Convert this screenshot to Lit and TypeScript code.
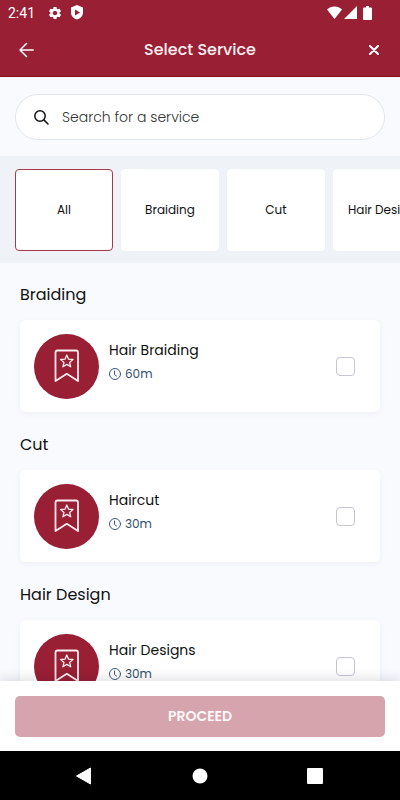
import { LitElement, html, css, svg } from "lit";
import { customElement, property, state } from "lit/decorators.js";
import { classMap } from "lit/directives/class-map.js";

interface Service {
  name: string;
  minutes: number;
}

interface Group {
  title: string;
  services: Service[];
}

const groups: Group[] = [
  { title: "Braiding", services: [{ name: "Hair Braiding", minutes: 60 }] },
  { title: "Cut", services: [{ name: "Haircut", minutes: 30 }] },
  { title: "Hair Design", services: [{ name: "Hair Designs", minutes: 30 }] },
];

const categories = ["All", "Braiding", "Cut", "Hair Design"];

const bookmark = svg`
  <path d="M1.500 32V3.500Q1.500 1.500 3.500 1.500H22Q24 1.500 24 3.500V32L12.800 24.800Z" stroke-width="1.800" />
  <path d="M12.800 6L14.600 10.200L19 10.500L15.600 13.400L16.700 17.800L12.800 15.400L8.900 17.800L10 13.400L6.600 10.500L11 10.200Z" stroke-width="1.300" />
`;

@customElement("service-card")
export class ServiceCard extends LitElement {
  @property() name = "";
  @property({ type: Number }) minutes = 0;

  static styles = css`
    :host {
      display: block;
    }
    .card {
      display: flex;
      align-items: center;
      gap: 10px;
      min-height: 92px;
      box-sizing: border-box;
      padding: 13px 25px 13px 14px;
      background: #fff;
      border-radius: 6px;
      box-shadow: 0 2px 6px rgba(40, 50, 90, 0.05);
    }
    .badge {
      display: grid;
      place-items: center;
      flex: none;
      width: 65px;
      height: 65px;
      border-radius: 50%;
      background: #991f34;
    }
    .mark {
      fill: none;
      stroke: #fbeef0;
      stroke-linejoin: round;
    }
    .text {
      flex: 1;
      min-width: 0;
      padding-bottom: 8px;
    }
    .name {
      display: block;
      font-size: 14px;
      line-height: 24px;
      color: #111;
    }
    .time {
      display: flex;
      align-items: center;
      gap: 4px;
      font-size: 12px;
      line-height: 24px;
      color: #34506b;
    }
    .clock {
      fill: none;
      stroke: #3d5a75;
      stroke-width: 1;
      stroke-linecap: round;
    }
    .tick {
      appearance: none;
      flex: none;
      width: 19px;
      height: 19px;
      margin: 0;
      border: 1px solid #c3c5d6;
      border-radius: 4px;
      background: #fff;
    }
    .tick:checked {
      background: #991f34;
      border-color: #991f34;
    }
  `;

  render() {
    return html`
      <div class="card">
        <div class="badge">
          <svg class="mark" width="26" height="34" viewBox="0 0 26 34">${bookmark}</svg>
        </div>
        <div class="text">
          <label class="name" for="pick">${this.name}</label>
          <div class="time">
            <svg class="clock" width="12" height="12" viewBox="0 0 12 12">
              <circle cx="6" cy="6" r="5.500" />
              <path d="M5.500 3V6.500L7.500 8" />
            </svg>
            <span>${this.minutes}m</span>
          </div>
        </div>
        <input class="tick" id="pick" type="checkbox" />
      </div>
    `;
  }
}

@customElement("app-root")
export class AppRoot extends LitElement {
  @state() private active = "All";

  static styles = css`
    :host {
      display: flex;
      flex-direction: column;
      height: 100vh;
      background: #f9fafe;
      color: #111;
      font-family: Poppins, Inter, sans-serif;
    }
    button {
      font: inherit;
      border: 0;
      padding: 0;
      cursor: pointer;
    }
    .status {
      display: flex;
      align-items: center;
      justify-content: space-between;
      flex: none;
      height: 25px;
      padding: 0 27px 0 8px;
      background: #991f34;
      color: #fff;
      fill: #fff;
    }
    .side {
      display: flex;
      align-items: center;
    }
    .clock {
      width: 32px;
      font: 14px/24px Roboto, sans-serif;
    }
    .notices {
      gap: 8px;
    }
    .signals {
      gap: 2px;
    }
    .bar {
      display: flex;
      align-items: center;
      justify-content: space-between;
      flex: none;
      box-sizing: border-box;
      height: 52px;
      padding: 0 18px 2px;
      background: #991f34;
      border-bottom: 1px solid #8b0a14;
      color: #fbeef0;
    }
    .title {
      margin: 0;
      font-size: 16px;
      font-weight: 500;
      line-height: 24px;
    }
    .tool {
      display: grid;
      place-items: center;
      width: 16px;
      height: 24px;
      background: none;
    }
    .line {
      fill: none;
      stroke: #fff;
      stroke-linecap: round;
      stroke-linejoin: round;
    }
    .content {
      flex: 1;
      min-height: 0;
      overflow-y: auto;
      scrollbar-width: none;
    }
    .search {
      display: flex;
      align-items: center;
      gap: 13px;
      box-sizing: border-box;
      height: 46px;
      margin: 17px 15px 16px;
      padding: 0 18px;
      border: 1px solid #e1e6ee;
      border-radius: 23px;
      background: #fff;
    }
    .lens {
      flex: none;
      fill: none;
      stroke: #111;
      stroke-width: 1.5;
      stroke-linecap: round;
    }
    .query {
      flex: 1;
      min-width: 0;
      padding: 0;
      border: 0;
      outline: 0;
      background: none;
      font: inherit;
      font-size: 14px;
      font-weight: 300;
      line-height: 24px;
      color: #111;
    }
    .query::placeholder {
      color: #333;
      opacity: 1;
    }
    .strip {
      display: flex;
      gap: 8px;
      padding: 13px 15px 12px;
      overflow-x: auto;
      scrollbar-width: none;
      background: #eff2f7;
    }
    .category {
      flex: none;
      box-sizing: border-box;
      width: 98px;
      height: 82px;
      border: 1px solid #fff;
      border-radius: 4px;
      background: #fff;
      color: #111;
      font-size: 12px;
      white-space: nowrap;
    }
    .category.active {
      border-color: #a53a4c;
    }
    .groups {
      padding: 19px 20px;
    }
    .group {
      margin-bottom: 20px;
    }
    .heading {
      margin: 0 0 12px;
      font-size: 16px;
      font-weight: 400;
      line-height: 26px;
    }
    .footer {
      position: relative;
      flex: none;
      padding: 15px 15px 14px;
      background: #fff;
      box-shadow: 0 -3px 10px rgba(20, 20, 40, 0.12);
    }
    .proceed {
      display: block;
      width: 100%;
      height: 41px;
      border-radius: 5px;
      background: #d6a4ad;
      color: #fff8f9;
      font-size: 14px;
      font-weight: 600;
    }
    .nav {
      display: flex;
      align-items: center;
      justify-content: space-between;
      flex: none;
      height: 49px;
      padding: 0 75px;
      background: #000;
    }
    .key {
      display: grid;
      background: none;
      fill: #fff;
    }
  `;

  render() {
    return html`
      <div class="status">
        <div class="side notices">
          <span class="clock">2:41</span>
          <svg width="14" height="14" viewBox="1 1 22 22">
            <path d="M19.140 12.940c.04-.3.06-.61.06-.94 0-.32-.02-.64-.07-.94l2.030-1.580c.18-.14.23-.41.12-.61l-1.920-3.320c-.12-.22-.37-.29-.59-.22l-2.390.96c-.5-.38-1.030-.7-1.620-.94l-.36-2.540c-.04-.24-.24-.41-.48-.41h-3.840c-.24 0-.43.17-.47.41l-.36 2.540c-.59.24-1.130.57-1.620.94l-2.390-.96c-.22-.08-.47 0-.59.22L2.740 8.870c-.12.21-.08.47.12.61l2.030 1.580c-.05.3-.09.63-.09.94s.02.64.07.94l-2.030 1.580c-.18.14-.23.41-.12.61l1.920 3.320c.12.22.37.29.59.22l2.390-.96c.5.38 1.030.7 1.620.94l.36 2.540c.05.24.24.41.48.41h3.840c.24 0 .44-.17.47-.41l.36-2.540c.59-.24 1.130-.56 1.620-.94l2.390.96c.22.08.47 0 .59-.22l1.920-3.320c.12-.22.07-.47-.12-.61l-2.010-1.580zM12 15.600c-1.980 0-3.600-1.620-3.600-3.600s1.620-3.600 3.600-3.600 3.600 1.620 3.600 3.600-1.620 3.600-3.600 3.600z" />
          </svg>
          <svg width="14" height="15" viewBox="0 0 14 15">
            <path fill-rule="evenodd" d="M7 0L13 2.500V7.500C13 11 10.500 13.500 7 14.500C3.500 13.500 1 11 1 7.500V2.500ZM5 4.500V10.500L10 7.500Z" />
          </svg>
        </div>
        <div class="side signals">
          <svg width="15" height="13" viewBox="0 0 15 13">
            <path d="M7.500 13L0 3.500C4 -0.600 11 -0.600 15 3.500Z" />
          </svg>
          <svg width="13" height="13" viewBox="0 0 13 13"><path d="M13 0V13H0Z" /></svg>
          <svg width="14" height="14" viewBox="0 0 14 14">
            <path d="M7 0H10V1.500H12Q13 1.500 13 2.500V13Q13 14 12 14H5Q4 14 4 13V2.500Q4 1.500 5 1.500H7Z" />
          </svg>
        </div>
      </div>
      <header class="bar">
        <button class="tool" aria-label="Back">
          <svg class="line" width="16" height="16" viewBox="0 0 16 16">
            <path d="M15.200 8H2M8.500 1.500L2 8L8.500 14.500" stroke-width="1.500" />
          </svg>
        </button>
        <h1 class="title">Select Service</h1>
        <button class="tool" aria-label="Close">
          <svg class="line" width="10" height="10" viewBox="0 0 10 10">
            <path d="M1 1L9 9M9 1L1 9" stroke-width="2" />
          </svg>
        </button>
      </header>
      <main class="content">
        <label class="search">
          <svg class="lens" width="15" height="15" viewBox="0 0 15 15">
            <circle cx="6" cy="6" r="5.200" />
            <path d="M9.900 9.900L14 14" />
          </svg>
          <input class="query" type="search" aria-label="Search for a service" placeholder="Search for a service" />
        </label>
        <nav class="strip">
          ${categories.map(
            (c) => html`<button
              class=${classMap({ category: true, active: c === this.active })}
              @click=${() => (this.active = c)}
            >${c}</button>`
          )}
        </nav>
        <div class="groups">
          ${groups.map(
            (g) => html`
              <section class="group">
                <h2 class="heading">${g.title}</h2>
                ${g.services.map(
                  (s) => html`<service-card .name=${s.name} .minutes=${s.minutes}></service-card>`
                )}
              </section>
            `
          )}
        </div>
      </main>
      <footer class="footer">
        <button class="proceed">PROCEED</button>
      </footer>
      <div class="nav">
        <button class="key" aria-label="System back">
          <svg width="17" height="18" viewBox="0 0 17 18"><path d="M15.500 1V17L1.500 9Z" stroke="#fff" stroke-linejoin="round" /></svg>
        </button>
        <button class="key" aria-label="Home">
          <svg width="16" height="16" viewBox="0 0 16 16"><circle cx="8" cy="8" r="7.500" /></svg>
        </button>
        <button class="key" aria-label="Recent apps">
          <svg width="18" height="16" viewBox="0 0 18 16"><rect width="16" height="16" rx="1" /></svg>
        </button>
      </div>
    `;
  }
}
